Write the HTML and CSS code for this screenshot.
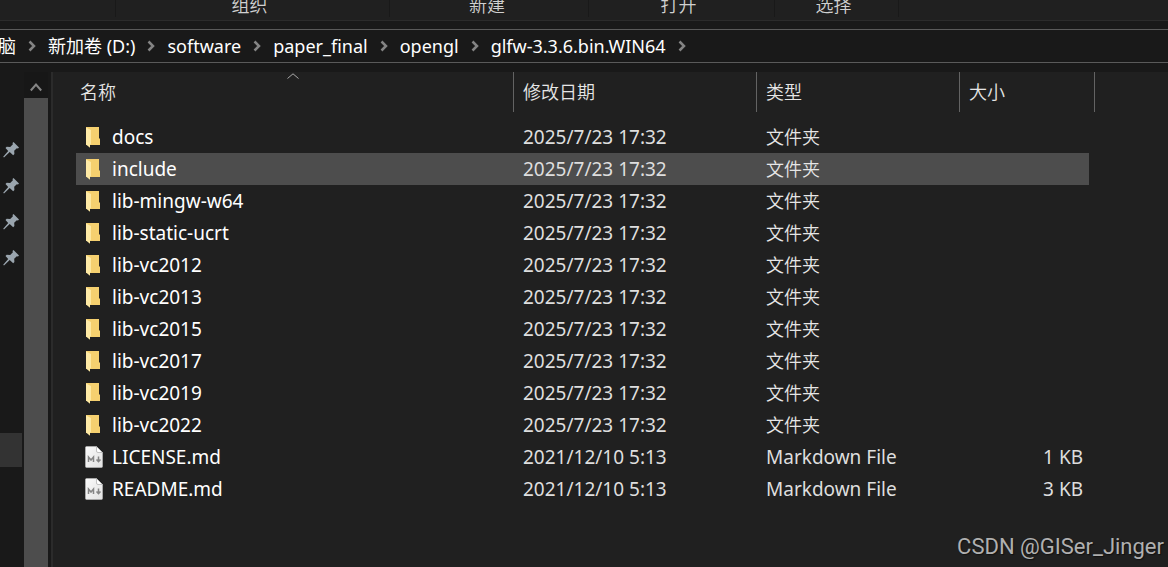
FILE: index.html
```html
<!DOCTYPE html>
<html lang="zh-CN">
<head>
<meta charset="utf-8">
<meta name="viewport" content="width=device-width, initial-scale=1">
<title>glfw-3.3.6.bin.WIN64</title>
<link rel="stylesheet" href="styles.css">
</head>
<body>
<svg class="defs" aria-hidden="true">
  <defs>
    <linearGradient id="paper" x1="0" y1="0" x2="1" y2="1"><stop offset="0" stop-color="#fafafa"/><stop offset="1" stop-color="#e2e2e2"/></linearGradient>
    <linearGradient id="flap" x1="0" y1="0" x2="1" y2="1"><stop offset="0" stop-color="#ffecaa"/><stop offset="1" stop-color="#fde79f"/></linearGradient>
    <symbol id="folder" viewBox="0 0 18 22"><path fill="#f5d06f" d="M1 1h13v11l1 1v6H1z"/><path fill="url(#flap)" d="M1 1.500L6 4v14l-1 .8v3L1 18.500z"/></symbol>
    <symbol id="md" viewBox="0 0 18 22"><path fill="url(#paper)" stroke="#c8c8c8" stroke-width=".5" d="M1.500.5h10l6 6v14q0 1-1 1h-15q-1 0-1-1v-19q0-1 1-1z"/><path fill="#fff" stroke="#aaa" stroke-width=".7" d="M11.500.5v4.500q0 1.500 1.500 1.500h4.500z"/><path fill="none" stroke="#858585" stroke-width="1.500" d="M3.500 16v-5l2.500 3 2.500-3v5M13.500 10.500v4M11.500 13.500l2 2.200 2-2.200"/></symbol>
    <symbol id="pin" viewBox="0 0 16 16"><path fill="#9aa5ae" d="M10.500 0L16 5.500l-1 1-1.200-.3-2.600 2.600.2 3.300-1.200 1.200-3.500-3.200L1 15.500l-.8-.8 5-5.800L2.500 6l1.200-1.200 3.500.2 2.700-2.700-.4-1.300z"/></symbol>
    <symbol id="sep" viewBox="0 0 8 12"><path fill="none" stroke="#858585" stroke-width="2.500" d="M1.500 1.500L6 6l-4.500 4.500"/></symbol>
  </defs>
</svg>
<div class="window">
  <header class="ribbon">
    <div class="group blank"></div>
    <div class="group organize">组织</div>
    <div class="group create">新建</div>
    <div class="group open">打开</div>
    <div class="group select">选择</div>
  </header>
  <nav class="address" aria-label="路径">
    <a href="#">脑</a><svg class="sep"><use href="#sep"/></svg>
    <a href="#">新加卷 (D:)</a><svg class="sep"><use href="#sep"/></svg>
    <a href="#">software</a><svg class="sep"><use href="#sep"/></svg>
    <a href="#">paper_final</a><svg class="sep"><use href="#sep"/></svg>
    <a href="#">opengl</a><svg class="sep"><use href="#sep"/></svg>
    <a href="#">glfw-3.3.6.bin.WIN64</a><svg class="sep"><use href="#sep"/></svg>
  </nav>
  <div class="body">
    <aside class="sidebar">
      <ul class="pins">
        <li><svg class="pin"><use href="#pin"/></svg></li>
        <li><svg class="pin"><use href="#pin"/></svg></li>
        <li><svg class="pin"><use href="#pin"/></svg></li>
        <li><svg class="pin"><use href="#pin"/></svg></li>
      </ul>
      <div class="current"></div>
    </aside>
    <div class="scrollbar">
      <button class="up" type="button" aria-label="向上滚动"><svg class="up-icon" viewBox="0 0 12 10"><path fill="none" stroke="#858585" stroke-width="2" d="M.8 8.500L6 2.500l5.200 6"/></svg></button>
      <div class="thumb"></div>
    </div>
    <main class="pane">
      <table class="files">
        <colgroup><col class="c-name"><col class="c-date"><col class="c-type"><col class="c-size"></colgroup>
        <thead>
          <tr>
            <th scope="col" aria-sort="ascending">名称<svg class="sort" viewBox="0 0 12 6"><path fill="none" stroke="#aaa" d="M.5 5.500L6 .8l5.500 4.700"/></svg></th>
            <th scope="col">修改日期</th><th scope="col">类型</th><th scope="col">大小</th>
          </tr>
        </thead>
        <tbody>
          <tr><td><span class="file"><svg class="icon"><use href="#folder"/></svg>docs</span></td><td>2025/7/23 17:32</td><td class="zh">文件夹</td><td></td></tr>
          <tr class="hover"><td><span class="file"><svg class="icon"><use href="#folder"/></svg>include</span></td><td>2025/7/23 17:32</td><td class="zh">文件夹</td><td></td></tr>
          <tr><td><span class="file"><svg class="icon"><use href="#folder"/></svg>lib-mingw-w64</span></td><td>2025/7/23 17:32</td><td class="zh">文件夹</td><td></td></tr>
          <tr><td><span class="file"><svg class="icon"><use href="#folder"/></svg>lib-static-ucrt</span></td><td>2025/7/23 17:32</td><td class="zh">文件夹</td><td></td></tr>
          <tr><td><span class="file"><svg class="icon"><use href="#folder"/></svg>lib-vc2012</span></td><td>2025/7/23 17:32</td><td class="zh">文件夹</td><td></td></tr>
          <tr><td><span class="file"><svg class="icon"><use href="#folder"/></svg>lib-vc2013</span></td><td>2025/7/23 17:32</td><td class="zh">文件夹</td><td></td></tr>
          <tr><td><span class="file"><svg class="icon"><use href="#folder"/></svg>lib-vc2015</span></td><td>2025/7/23 17:32</td><td class="zh">文件夹</td><td></td></tr>
          <tr><td><span class="file"><svg class="icon"><use href="#folder"/></svg>lib-vc2017</span></td><td>2025/7/23 17:32</td><td class="zh">文件夹</td><td></td></tr>
          <tr><td><span class="file"><svg class="icon"><use href="#folder"/></svg>lib-vc2019</span></td><td>2025/7/23 17:32</td><td class="zh">文件夹</td><td></td></tr>
          <tr><td><span class="file"><svg class="icon"><use href="#folder"/></svg>lib-vc2022</span></td><td>2025/7/23 17:32</td><td class="zh">文件夹</td><td></td></tr>
          <tr><td><span class="file"><svg class="icon"><use href="#md"/></svg>LICENSE.md</span></td><td>2021/12/10 5:13</td><td>Markdown File</td><td>1 KB</td></tr>
          <tr><td><span class="file"><svg class="icon"><use href="#md"/></svg>README.md</span></td><td>2021/12/10 5:13</td><td>Markdown File</td><td>3 KB</td></tr>
        </tbody>
      </table>
    </main>
  </div>
  <div class="watermark">CSDN @GISer_Jinger</div>
</div>
</body>
</html>
```
FILE: styles.css
```css
* { box-sizing: border-box; }
body {
  margin: 0;
  background: #191919;
  color: #fff;
  font-family: "Noto Sans", "Noto Sans CJK SC", sans-serif;
  font-size: 18px;
  line-height: 24px;
}
.defs { position: absolute; width: 0; height: 0; }
.window { position: relative; display: flex; flex-direction: column; min-height: 100vh; overflow: hidden; }

.ribbon { display: flex; align-items: flex-end; height: 21px; overflow: hidden; background: #202020; border-bottom: 1px solid #2b2b2b; color: #d0d0d0; font-weight: 350; }
.group { height: 24px; margin-bottom: 3px; border-right: 1px solid #191919; text-align: center; }
.blank { width: 116px; }
.organize { width: 274px; padding-right: 6px; }
.create { width: 199px; padding-right: 4px; }
.open { width: 186px; padding-right: 6px; }
.select { width: 124px; padding-right: 6px; }

.address { display: flex; align-items: center; gap: 12px; height: 34px; margin: 8px 0 0 -2px; border: solid #5a5a5a; border-width: 1px 0; white-space: nowrap; }
.address a { color: #fff; text-decoration: none; }
.sep { flex: none; width: 8px; height: 12px; }

.body { display: flex; flex: 1; }
.sidebar { width: 24px; padding-top: 69px; }
.pins { margin: 0 0 157px; padding: 0; list-style: none; }
.pins li { display: flex; align-items: center; height: 36px; padding-left: 3px; }
.pin { width: 16px; height: 16px; }
.current { width: 22px; height: 34px; background: #333; }
.scrollbar { display: flex; flex-direction: column; width: 24px; padding-top: 9px; }
.up { display: flex; align-items: center; justify-content: center; height: 26px; padding: 4px 0 0; border: 0; background: #171717; }
.up-icon { width: 12px; height: 10px; }
.thumb { flex: 1; background: #4d4d4d; }
.pane { flex: 1; margin: 9px 0 0 3px; padding-left: 23px; background: #202020; border-left: 2px solid #2b2b2b; }

.files { border-collapse: separate; border-spacing: 0; table-layout: fixed; width: 1019px; }
.c-name { width: 438px; }
.c-date { width: 243px; }
.c-type { width: 203px; }
.c-size { width: 135px; }
.files th { position: relative; height: 40px; padding: 0 0 0 9px; border-right: 1px solid #636363; color: #e6e6e6; font-weight: 350; text-align: left; }
.files th:first-child { padding-left: 4px; }
.sort { position: absolute; top: 1px; left: 50%; width: 12px; height: 6px; margin-left: -8px; }
.files tbody::before { content: ""; display: block; height: 9px; }
.files td { height: 32px; padding: 0 0 0 9px; color: #dedede; font-size: 19px; white-space: nowrap; }
.files td:first-child { color: #fff; }
.files .zh { color: #e6e6e6; font-size: 18px; font-weight: 350; }
.files td:last-child { padding-right: 6px; border-right: 6px solid transparent; background-clip: padding-box; text-align: right; }
.hover td { background-color: #4d4d4d; }
.file { display: flex; align-items: center; gap: 9px; }
.icon { width: 18px; height: 22px; }

.watermark { position: absolute; right: 4px; bottom: 6px; color: #b0b0b0; font: 22px/28px Roboto, sans-serif; text-shadow: 1px 1px 1px #111; }
```
